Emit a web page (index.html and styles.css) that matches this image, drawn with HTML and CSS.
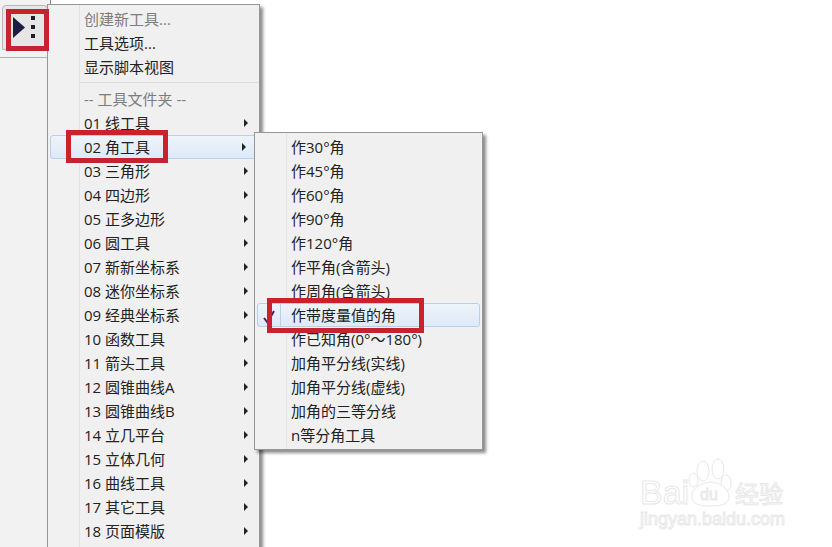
FILE: index.html
```html
<!DOCTYPE html>
<html lang="zh">
<head>
<meta charset="utf-8">
<title>工具菜单</title>
<link rel="stylesheet" href="styles.css">
</head>
<body>
<div class="stage">
  <div class="side">
    <div class="toolbar">
      <div class="toolbtn">
        <svg class="toolicon" width="24" height="24" viewBox="0 0 24 24"><path d="M0 1 L12 11.500 L0 22 Z" fill="#1c1c44"/><rect x="18" y="0" width="4" height="4" fill="#1f1f2a"/><rect x="18" y="9" width="4" height="4" fill="#1f1f2a"/><rect x="18" y="18" width="4" height="4" fill="#1f1f2a"/></svg>
      </div>
    </div>
  </div>
  <div class="menu main">
    <div class="item off">创建新工具...</div>
    <div class="item">工具选项...</div>
    <div class="item">显示脚本视图</div>
    <div class="sep"></div>
    <div class="item off">-- 工具文件夹 --</div>
    <div class="item sub">01 线工具</div>
    <div class="item sub hot">02 角工具</div>
    <div class="item sub">03 三角形</div>
    <div class="item sub">04 四边形</div>
    <div class="item sub">05 正多边形</div>
    <div class="item sub">06 圆工具</div>
    <div class="item sub">07 新新坐标系</div>
    <div class="item sub">08 迷你坐标系</div>
    <div class="item sub">09 经典坐标系</div>
    <div class="item sub">10 函数工具</div>
    <div class="item sub">11 箭头工具</div>
    <div class="item sub">12 圆锥曲线A</div>
    <div class="item sub">13 圆锥曲线B</div>
    <div class="item sub">14 立几平台</div>
    <div class="item sub">15 立体几何</div>
    <div class="item sub">16 曲线工具</div>
    <div class="item sub">17 其它工具</div>
    <div class="item sub">18 页面模版</div>
  </div>
  <div class="menu second">
    <div class="item">作30°角</div>
    <div class="item">作45°角</div>
    <div class="item">作60°角</div>
    <div class="item">作90°角</div>
    <div class="item">作120°角</div>
    <div class="item">作平角(含箭头)</div>
    <div class="item">作周角(含箭头)</div>
    <div class="item hot">作带度量值的角<span class="checkbox"><svg class="check" width="13" height="14" viewBox="0 0 13 14"><path d="M1 8 L4.500 12.500 L11 1" fill="none" stroke="#5a1a5c" stroke-width="2"/></svg></span></div>
    <div class="item">作已知角(0°～180°)</div>
    <div class="item">加角平分线(实线)</div>
    <div class="item">加角平分线(虚线)</div>
    <div class="item">加角的三等分线</div>
    <div class="item">n等分角工具</div>
  </div>
  <div class="mark m1"></div>
  <div class="mark m2"></div>
  <div class="mark m3"></div>
  <div class="wm">
    <svg class="paw" width="46" height="50" viewBox="0 0 46 50"><g fill="#fff" stroke="#e8e8e8" stroke-width="1"><ellipse cx="5.500" cy="22" rx="4.500" ry="7"/><ellipse cx="15" cy="13" rx="6" ry="10"/><ellipse cx="30" cy="11" rx="6" ry="10"/><ellipse cx="38" cy="25" rx="5" ry="8"/><path d="M4 38 C4 30 13 25 22 24 C32 24 41 31 41 39 C41 46 33 48 22 48 C11 48 4 46 4 38 Z"/></g></svg>
    <span class="wm-bai">Bai</span>
    <span class="wm-du">du</span>
    <span class="wm-jy">经验</span>
    <span class="wm-url">jingyan.baidu.com</span>
  </div>
</div>
</body>
</html>
```
FILE: styles.css
```css
* { box-sizing: border-box; }
html, body { margin: 0; padding: 0; }
body { background: #fff; font-family: "Open Sans", "Noto Sans CJK SC", sans-serif; }
.stage { position: relative; width: 832px; height: 547px; overflow: hidden; background: #fff; }
.side { width: 51px; height: 547px; background: #f2f2f2; border-right: 1px solid #8a8a8a; }
.toolbar { height: 58px; padding: 5px 0 7px 2px; border-bottom: 1px solid #b4b4b4; }
.toolbtn { width: 46px; height: 45px; background: #e6e6e6; border: 1px solid #b8b8b8; border-radius: 4px 4px 0 0; padding: 10px 0 0 10px; }
.toolicon { display: block; }
.menu { position: absolute; border: 1px solid #979797; box-shadow: 3px 3px 3px rgba(0,0,0,.45); font-size: 15px; color: #222; padding-top: 2px; background: linear-gradient(to right, #f1f1f1 31px, #e2e3e3 31px, #e2e3e3 32px, #f0f0f0 32px); }
.main { left: 47px; top: 4px; width: 213px; height: 560px; }
.second { left: 254px; top: 132px; width: 229px; height: 318px; }
.item { position: relative; height: 24px; line-height: 24px; padding-left: 36px; white-space: nowrap; }
.off { color: #7d7d7d; }
.sep { height: 1px; margin: 3px 0 4px 32px; background: #dcdcdc; }
.sub::after { content: ""; position: absolute; right: 11px; top: 8px; border-left: 4px solid #222; border-top: 4px solid transparent; border-bottom: 4px solid transparent; }
.hot { background: linear-gradient(#eef4fb, #dde9f7); outline: 1px solid #b8d0ea; outline-offset: -1px; border-radius: 3px; margin: 0 2px; padding-left: 34px; }
.checkbox { position: absolute; left: 0; top: 0; width: 24px; height: 24px; border-right: 1px solid #b8d0ea; }
.check { position: absolute; left: 6px; top: 7px; }
.mark { position: absolute; border: 5px solid #c6232e; }
.m1 { left: 6px; top: 9px; width: 43px; height: 42px; }
.m2 { left: 66px; top: 130px; width: 102px; height: 33px; }
.m3 { left: 267px; top: 298px; width: 157px; height: 35px; }
.wm { position: absolute; left: 640px; top: 455px; width: 192px; height: 92px; color: #fff; -webkit-text-stroke: 1px #e8e8e8; font-family: "Liberation Sans", sans-serif; }
.wm span { position: absolute; white-space: nowrap; line-height: 1; }
.paw { position: absolute; left: 48px; top: 3px; }
.wm-bai { left: 0; top: 20px; font-size: 34px; }
.wm-du { left: 60px; top: 32px; font-size: 16px; }
.wm-jy { left: 95px; top: 26px; font-size: 24px; font-family: "Noto Sans CJK SC", sans-serif; }
.wm-url { left: 0; top: 55px; font-size: 18px; }
```
